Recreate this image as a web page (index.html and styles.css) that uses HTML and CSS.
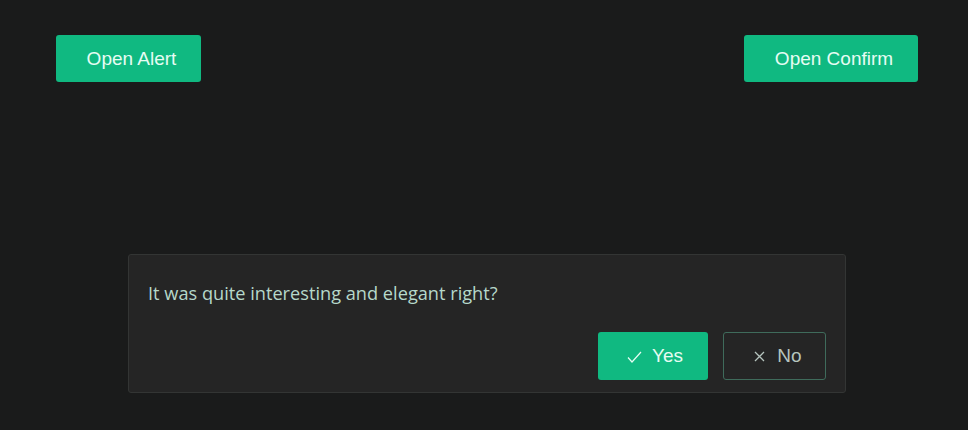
FILE: index.html
```html
<!DOCTYPE html>
<html>
<head>
<meta charset="utf-8">
<link rel="stylesheet" href="styles.css">
</head>
<body>
<div class="top">
  <button class="btn btn-primary alert-btn">Open Alert</button>
  <button class="btn btn-primary confirm-btn">Open Confirm</button>
</div>
<div class="dialog">
  <p class="msg">It was quite interesting and elegant right?</p>
  <div class="actions">
    <button class="btn btn-primary yes"><svg class="ico" width="15" height="14" viewBox="0 0 15 14"><path d="M1 7.5 L5 12 L14 2" fill="none" stroke="currentColor" stroke-width="1.2"/></svg>Yes</button>
    <button class="btn btn-outline no"><svg class="ico" width="11" height="11" viewBox="0 0 11 11"><path d="M1 1 L10 10 M10 1 L1 10" fill="none" stroke="currentColor" stroke-width="1.3"/></svg>No</button>
  </div>
</div>
</body>
</html>
```
FILE: styles.css
```css
html, body {
  margin: 0;
  padding: 0;
  background: #1a1b1b;
  height: 100%;
}
body {
  font-family: "Liberation Sans", Arial, sans-serif;
}
.top {
  display: flex;
  justify-content: space-between;
  padding: 35px 50px 0 56px;
}
.btn {
  font-family: "Liberation Sans", Arial, sans-serif;
  font-size: 19px;
  height: 47px;
  border-radius: 3px;
  border: 1px solid transparent;
  display: inline-flex;
  align-items: center;
  justify-content: center;
  cursor: pointer;
  box-sizing: border-box;
  padding: 0;
}
.btn-primary {
  background: #10b981;
  color: #e6fcf3;
}
.alert-btn { width: 145px; padding-left: 6px; }
.confirm-btn { width: 174px; padding-left: 6px; }
.dialog {
  box-sizing: border-box;
  margin: 172px 0 0 128px;
  width: 718px;
  height: 139px;
  background: #252525;
  border: 1px solid #333534;
  border-radius: 3px;
  padding: 0 19px 12px 19px;
  display: flex;
  flex-direction: column;
}
.msg {
  margin: 26px 0 0 0;
  font-family: "Open Sans", "Noto Sans", sans-serif;
  font-size: 18.2px;
  line-height: 24px;
  color: #b6d8ca;
}
.actions {
  margin-top: auto;
  display: flex;
  justify-content: flex-end;
  gap: 15px;
}
.yes { width: 110px; height: 48px; padding-left: 4px; }
.no {
  width: 103px;
  height: 48px;
  background: transparent;
  border: 1px solid #3f6b5b;
  color: #b5c4be;
  padding-left: 7px;
}
.yes .ico { margin-right: 10px; margin-top: 2px; }
.no .ico { margin-right: 12px; }
```
